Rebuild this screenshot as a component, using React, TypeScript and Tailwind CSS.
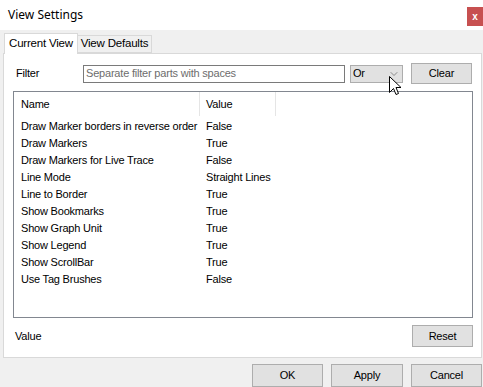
import { ChevronDown } from 'lucide-react';

const rows: [string, string][] = [
  ['Draw Marker borders in reverse order', 'False'],
  ['Draw Markers', 'True'],
  ['Draw Markers for Live Trace', 'False'],
  ['Line Mode', 'Straight Lines'],
  ['Line to Border', 'True'],
  ['Show Bookmarks', 'True'],
  ['Show Graph Unit', 'True'],
  ['Show Legend', 'True'],
  ['Show ScrollBar', 'True'],
  ['Use Tag Brushes', 'False'],
];

const btn =
  'flex items-center justify-center border border-[#adadad] bg-[#e1e1e1] text-[11px] text-black';

function Cursor() {
  return (
    <svg className="absolute left-[389px] top-[76px]" width="13" height="21" viewBox="0 0 13 21">
      <path
        d="M0.5 0.5 L0.5 16.5 L4.5 12.5 L7 18.5 L9.5 17.5 L7 11.5 L12 11.5 Z"
        fill="#fff"
        stroke="#000"
        strokeWidth="1"
        strokeLinejoin="miter"
      />
    </svg>
  );
}

export default function App() {
  return (
    <div className="relative h-[387px] w-[483px] overflow-hidden bg-[#f0f0f0] font-['Liberation_Sans',Arial,sans-serif] text-[11px] tracking-[-0.2px] text-black">
      {/* title bar */}
      <div className="flex h-[30px] items-start justify-between bg-white">
        <span className="mt-[6px] ml-[8px] font-['Noto_Sans',sans-serif] text-[12px] tracking-normal">View Settings</span>
        <div className="mt-[7px] flex h-[19px] w-[16px] items-center justify-center bg-[#c75050] text-[10px] font-bold text-white">
          x
        </div>
      </div>

      {/* tabs */}
      <div className="mt-[3px] flex items-end pl-[4px]">
        <div className="relative z-10 -mb-px flex h-[21px] w-[74px] items-center justify-center border border-b-0 border-[#d9d9d9] bg-white text-[11.5px]">
          Current View
        </div>
        <div className="flex h-[18px] w-[74px] items-center justify-center border border-l-0 border-[#d9d9d9] bg-[#f0f0f0] text-[11.5px]">
          View Defaults
        </div>
      </div>

      {/* panel */}
      <div className="ml-[3px] flex h-[305px] w-[479px] flex-col border border-[#d9d9d9] bg-white">
        <div className="mt-[9px] flex h-[21px] items-center">
          <span className="ml-[12px] w-[67px]">Filter</span>
          <div className="flex h-[18px] w-[262px] items-center border border-[#7a7a7a] px-[2px] text-[#6d6d6d]">
            Separate filter parts with spaces
          </div>
          <div className="ml-[5px] flex h-[18px] w-[53px] items-center justify-between border border-[#adadad] bg-[#e1e1e1] pl-[2px] pr-[2px]">
            <span>Or</span>
            <ChevronDown size={12} strokeWidth={1.25} color="#555" />
          </div>
          <div className={`${btn} ml-[8px] h-[21px] w-[61px]`}>Clear</div>
        </div>

        <div className="mt-[7px] ml-[9px] h-[227px] w-[460px] border border-[#828790]">
          <div className="flex h-[24px]">
            <div className="flex w-[186px] items-center border-r border-[#e5e5e5] pl-[7px] pt-[1px]">Name</div>
            <div className="flex w-[76px] items-center border-r border-[#e5e5e5] pl-[6px] pt-[1px]">Value</div>
          </div>
          <div className="flex flex-col pt-[2px]">
            {rows.map(([name, value]) => (
              <div key={name} className="flex h-[17px] items-center">
                <span className="w-[192px] pl-[7px] whitespace-nowrap">{name}</span>
                <span>{value}</span>
              </div>
            ))}
          </div>
        </div>

        <div className="mt-[7px] flex h-[22px] items-center justify-between">
          <span className="ml-[11px]">Value</span>
          <div className={`${btn} mr-[8px] h-[22px] w-[61px]`}>Reset</div>
        </div>
      </div>

      {/* dialog buttons */}
      <div className="mt-[6px] flex justify-end gap-[8px] pr-[1px]">
        <div className={`${btn} h-[23px] w-[71px]`}>OK</div>
        <div className={`${btn} h-[23px] w-[72px]`}>Apply</div>
        <div className={`${btn} h-[23px] w-[71px]`}>Cancel</div>
      </div>

      <Cursor />
    </div>
  );
}
